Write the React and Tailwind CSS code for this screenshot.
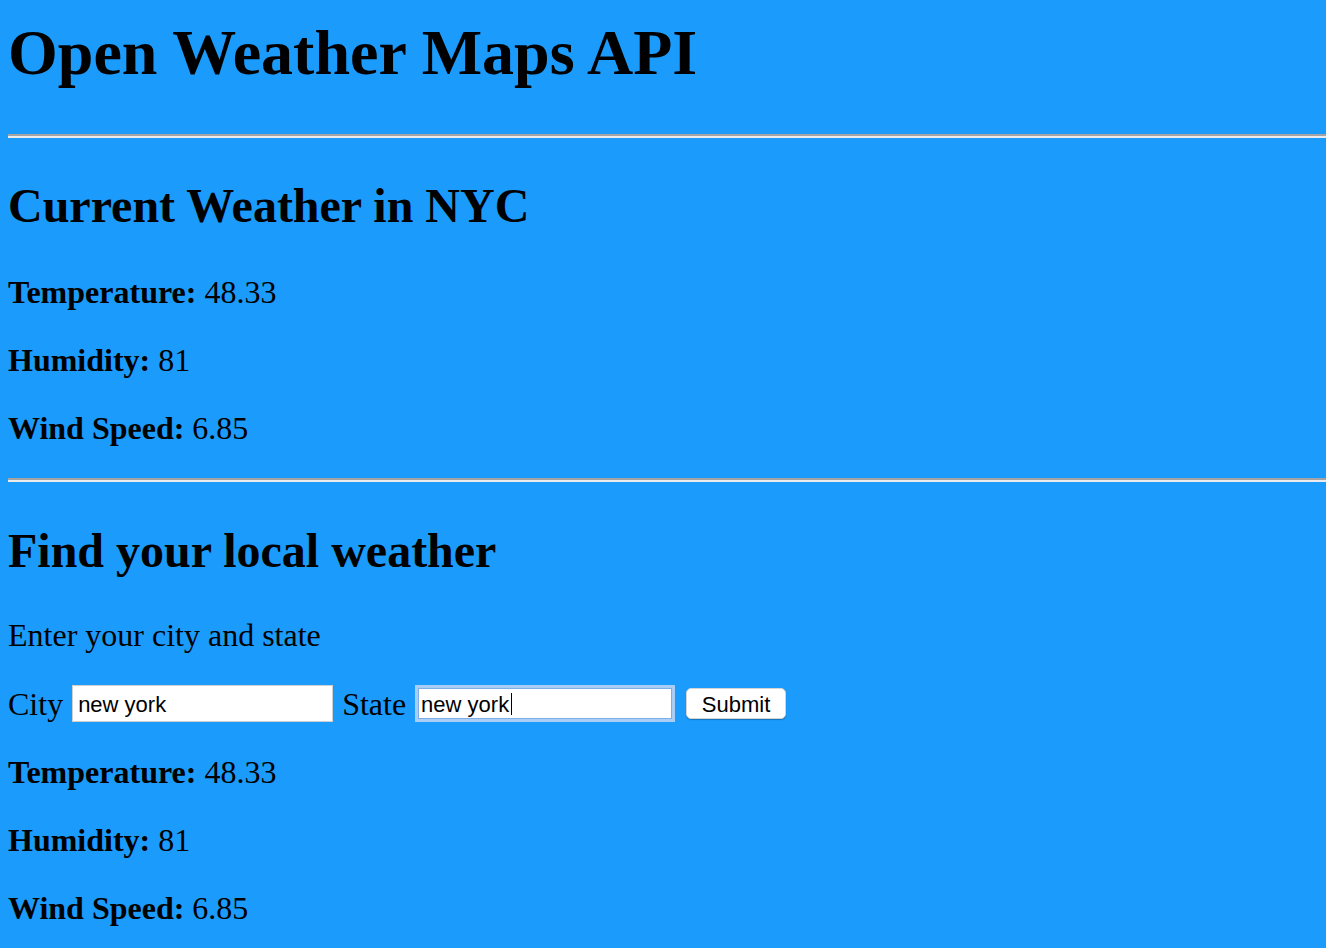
import React, { useState } from 'react';

const serif = { fontFamily: '"Liberation Serif", "Times New Roman", serif' };
const sans = { fontFamily: '"Liberation Sans", Arial, sans-serif' };

const Stat = ({ label, value, className = '' }) => (
  <p className={`text-[32px] leading-[36px] ${className}`}>
    <strong className="font-bold">{label}:</strong> {value}
  </p>
);

const Divider = ({ className = '' }) => (
  <hr className={`h-0 border-t-2 border-b-2 border-t-[#a4a4a4] border-b-[#ececec] ${className}`} />
);

export default function App() {
  const [city, setCity] = useState('new york');
  const [state, setState] = useState('new york');

  const weather = { temp: '48.33', humidity: '81', wind: '6.85' };

  return (
    <div className="min-h-[948px] bg-[#1b9bfc] text-black pb-8" style={serif}>
      {/* Header */}
      <h1 className="pl-2 pt-[17px] text-[64px] leading-[71px] font-bold">Open Weather Maps API</h1>
      <Divider className="ml-2 mt-[46px]" />

      {/* Current weather */}
      <div className="pl-2">
        <h2 className="mt-[41px] text-[48px] leading-[53px] font-bold">Current Weather in NYC</h2>
        <Stat className="mt-[42px]" label="Temperature" value={weather.temp} />
        <Stat className="mt-8" label="Humidity" value={weather.humidity} />
        <Stat className="mt-8" label="Wind Speed" value={weather.wind} />
      </div>
      <Divider className="ml-2 mt-[32px]" />

      {/* Search form */}
      <div className="pl-2">
        <h2 className="mt-[42px] text-[48px] leading-[53px] font-bold">Find your local weather</h2>
        <p className="mt-10 text-[32px] leading-[36px]">Enter your city and state</p>

        <form className="mt-8 flex items-center h-[37px] text-[32px] leading-[36px]" onSubmit={(e) => e.preventDefault()}>
          <label>City</label>
          <input
            className="ml-[9px] w-[261px] h-[37px] px-[5px] pt-[3px] bg-white border border-[#cfcfcf] outline-none text-[22px] text-black"
            style={sans}
            value={city}
            onChange={(e) => setCity(e.target.value)}
          />
          <label className="ml-[9px]">State</label>
          <div className="relative ml-[12px]">
            <input
              className="block w-[254px] h-[31px] px-[2px] pt-[3px] bg-white border border-[#7eaee9] ring-[3px] ring-[#a9cdf3] outline-none text-[22px] text-black"
              style={sans}
              value={state}
              onChange={(e) => setState(e.target.value)}
            />
            {/* text caret */}
            <span className="absolute left-[93px] top-[5px] w-px h-[22px] bg-black" />
          </div>
          <button
            type="submit"
            className="ml-[14px] w-[100px] h-[31px] pt-[2px] rounded-[5px] bg-white border border-[#d4d4d4] shadow-[0_1px_1px_rgba(0,0,0,0.25)] text-[22px] leading-none text-black"
            style={sans}
          >
            Submit
          </button>
        </form>

        <Stat className="mt-8" label="Temperature" value={weather.temp} />
        <Stat className="mt-8" label="Humidity" value={weather.humidity} />
        <Stat className="mt-8" label="Wind Speed" value={weather.wind} />
      </div>
    </div>
  );
}
